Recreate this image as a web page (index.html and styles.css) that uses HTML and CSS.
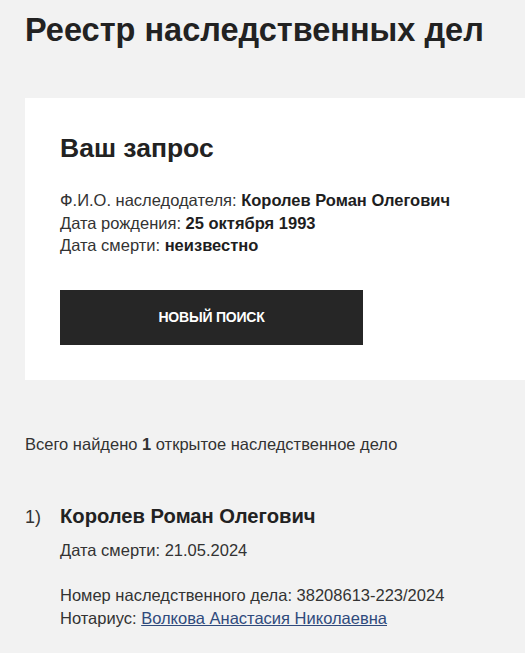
FILE: index.html
```html
<!DOCTYPE html>
<html lang="ru">
<head>
<meta charset="utf-8">
<link rel="stylesheet" href="styles.css">
</head>
<body>
<div class="page">
  <h1 class="title">Реестр наследственных дел</h1>
  <section class="card">
    <h2 class="card-title">Ваш запрос</h2>
    <div class="info">
      <div>Ф.И.О. наследодателя: <b>Королев Роман Олегович</b></div>
      <div>Дата рождения: <b>25 октября 1993</b></div>
      <div>Дата смерти: <b>неизвестно</b></div>
    </div>
    <button class="btn">НОВЫЙ ПОИСК</button>
  </section>
  <p class="total">Всего найдено <b>1</b> открытое наследственное дело</p>
  <ol class="results">
    <li class="result">
      <span class="num">1)</span>
      <div class="result-body">
        <div class="name">Королев Роман Олегович</div>
        <div class="death">Дата смерти: 21.05.2024</div>
        <div class="meta">
          <div>Номер наследственного дела: 38208613-223/2024</div>
          <div>Нотариус: <a href="#" class="link">Волкова Анастасия Николаевна</a></div>
        </div>
      </div>
    </li>
  </ol>
</div>
</body>
</html>
```

FILE: styles.css
```css
html, body {
  margin: 0;
  padding: 0;
  background: #f2f2f2;
}
body {
  font-family: "Liberation Sans", Arial, sans-serif;
  color: #222;
}
.page {
  padding: 0 0 0 25px;
}
.title {
  margin: 0;
  padding-top: 10px;
  font-size: 32.5px;
  line-height: 40px;
  font-weight: bold;
  color: #222;
}
.card {
  margin-top: 48px;
  background: #fff;
  padding: 35px;
  height: 212px;
}
.card-title {
  margin: 0;
  font-size: 26.5px;
  line-height: 30px;
  font-weight: bold;
  color: #222;
}
.info {
  margin-top: 26px;
  font-size: 16.5px;
  line-height: 22.5px;
  color: #333;
}
.info b {
  color: #1e1e1e;
}
.btn {
  display: flex;
  align-items: center;
  justify-content: center;
  margin-top: 33px;
  width: 303px;
  height: 55px;
  background: #262626;
  color: #fff;
  border: none;
  font-family: "Liberation Sans", Arial, sans-serif;
  font-size: 14px;
  font-weight: bold;
  letter-spacing: -0.2px;
}
.total {
  margin: 53px 0 0 0;
  font-size: 16.5px;
  line-height: 22px;
  color: #333;
}
.results {
  list-style: none;
  margin: 48px 0 0 0;
  padding: 0;
}
.result {
  display: flex;
  align-items: baseline;
}
.num {
  width: 35px;
  flex-shrink: 0;
  font-size: 18px;
  color: #333;
}
.name {
  font-size: 20.2px;
  line-height: 26px;
  font-weight: bold;
  color: #222;
}
.death {
  margin-top: 10px;
  font-size: 16.5px;
  line-height: 22px;
  color: #333;
}
.meta {
  margin-top: 23px;
  font-size: 16.5px;
  line-height: 22.5px;
  color: #333;
}
.link {
  color: #2f4a7c;
  text-decoration: underline;
}
```
